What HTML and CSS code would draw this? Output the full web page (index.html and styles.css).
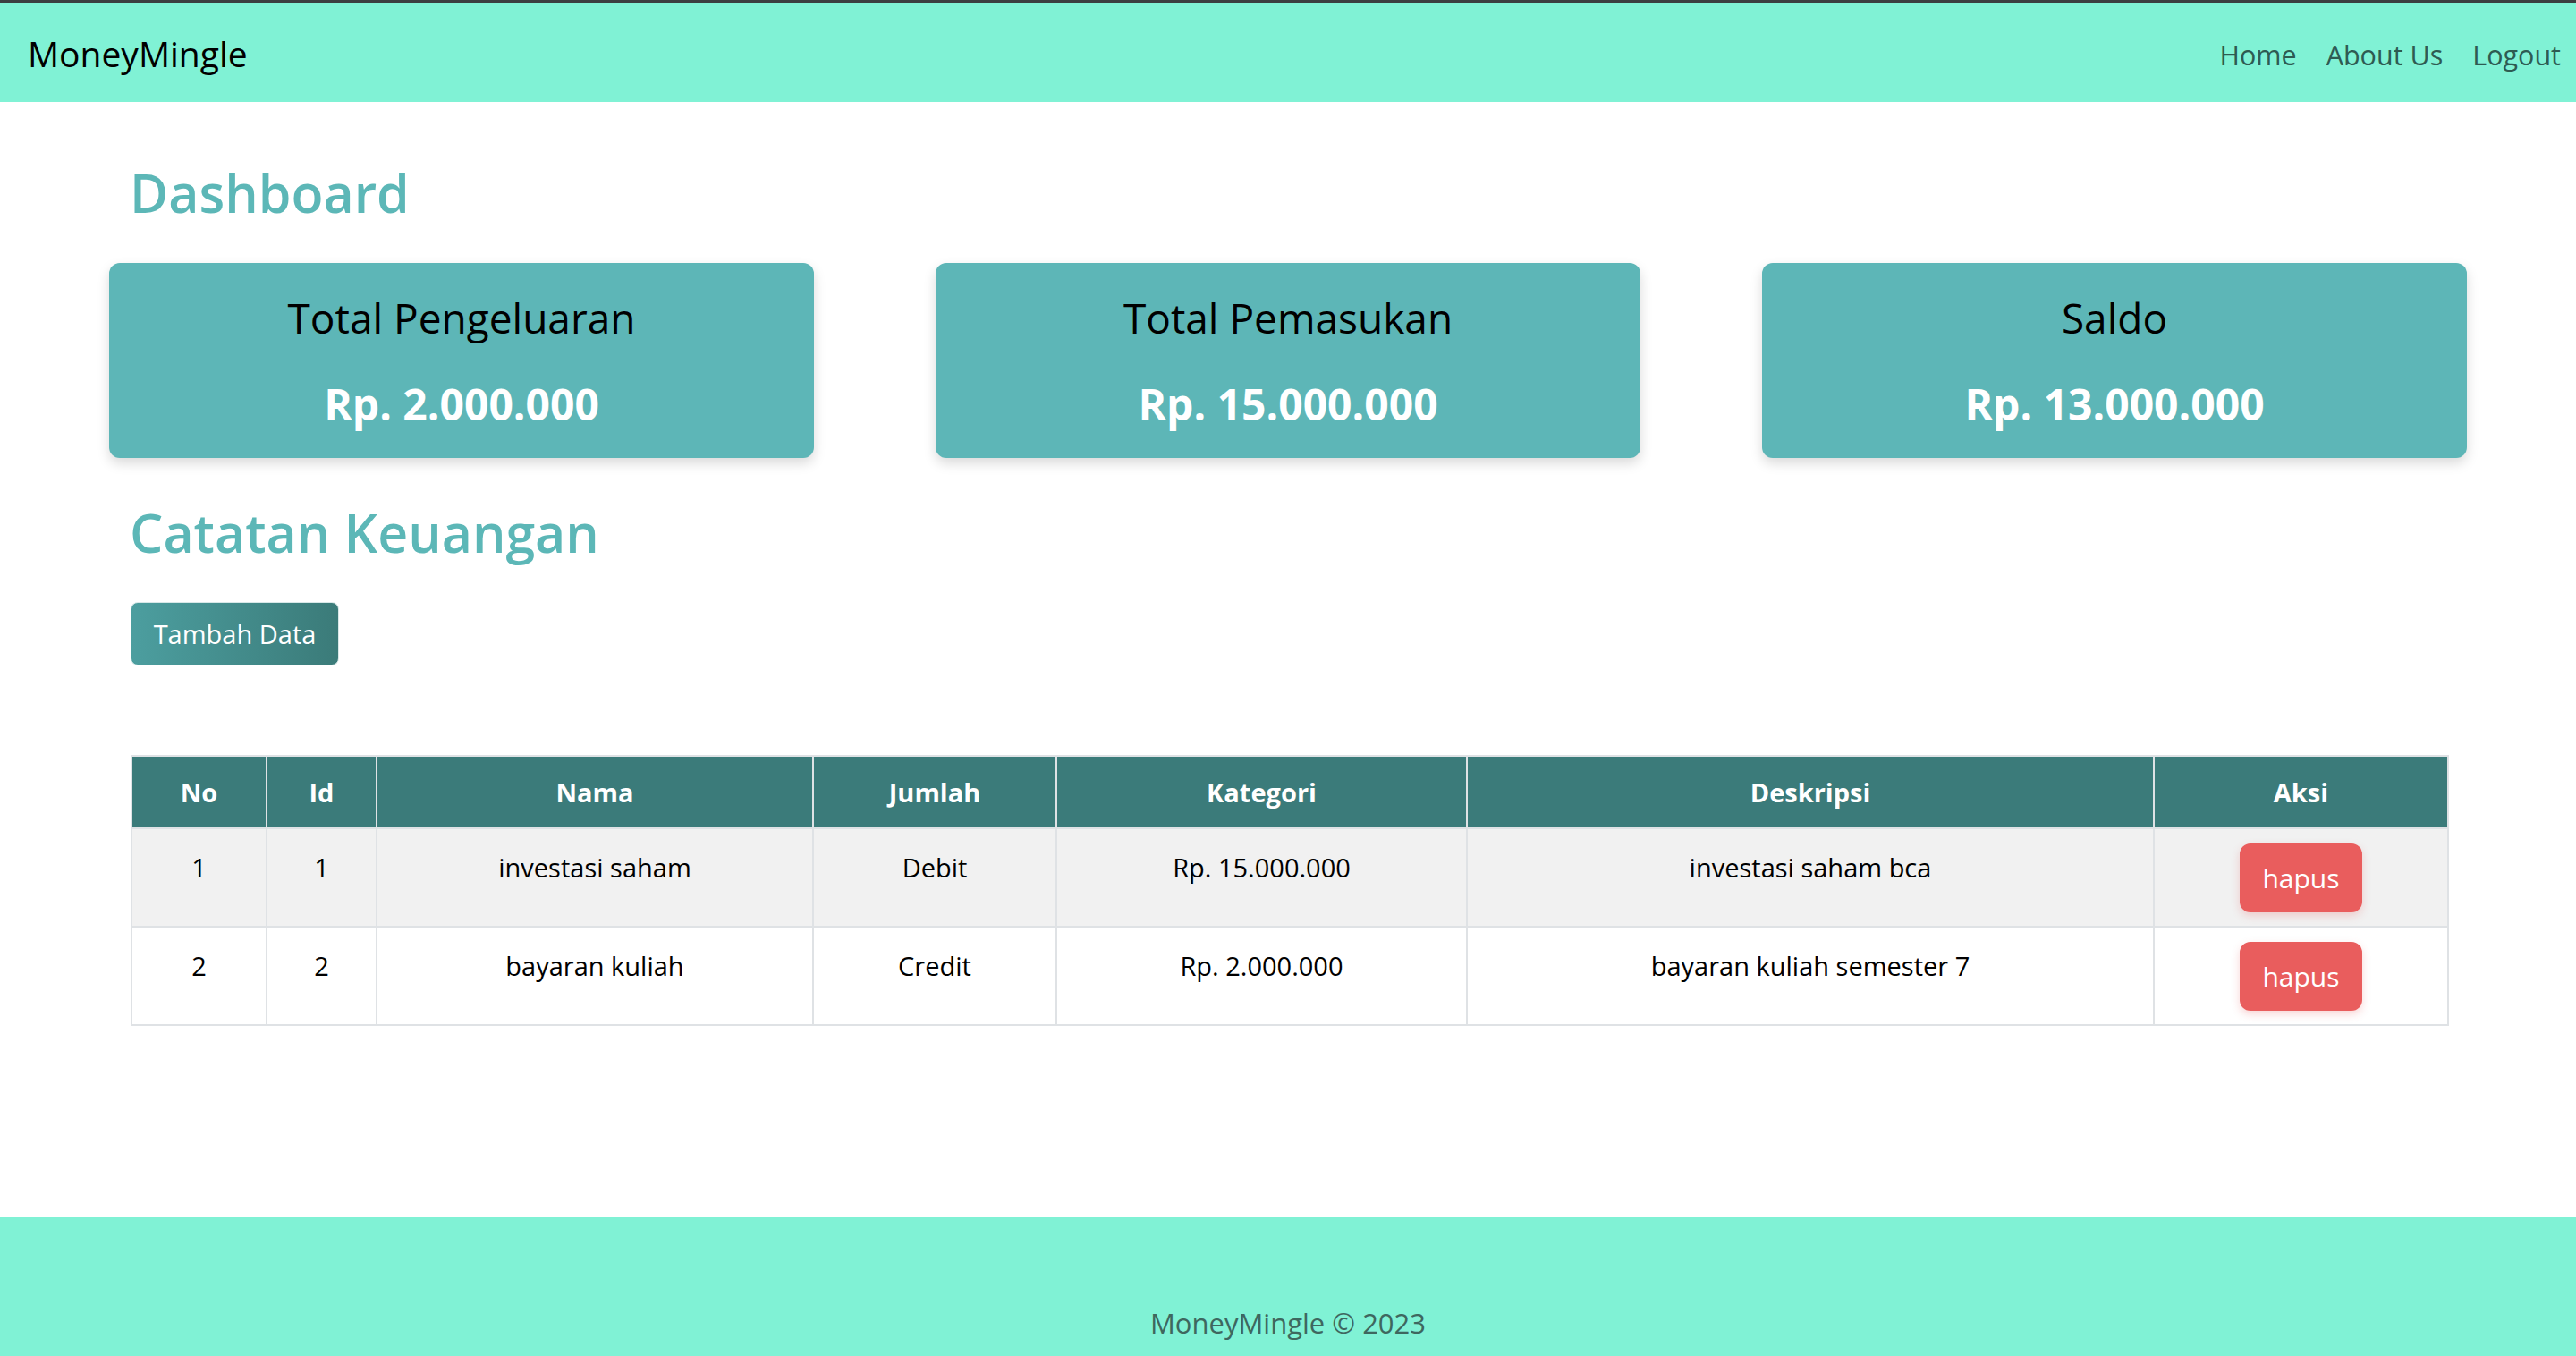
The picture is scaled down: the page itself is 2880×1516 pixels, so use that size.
FILE: index.html
```html
<!DOCTYPE html>
<html lang="id">
<head>
<meta charset="utf-8">
<title>MoneyMingle</title>
<link rel="stylesheet" href="styles.css">
</head>
<body>
<div class="topline"></div>
<nav class="navbar">
  <a class="brand" href="#">MoneyMingle</a>
  <ul class="nav-links">
    <li><a href="#">Home</a></li>
    <li><a href="#">About Us</a></li>
    <li><a href="#">Logout</a></li>
  </ul>
</nav>
<main class="container">
  <h1 class="section-title">Dashboard</h1>
  <div class="cards">
    <div class="card">
      <h3 class="card-title">Total Pengeluaran</h3>
      <p class="card-value">Rp. 2.000.000</p>
    </div>
    <div class="card">
      <h3 class="card-title">Total Pemasukan</h3>
      <p class="card-value">Rp. 15.000.000</p>
    </div>
    <div class="card">
      <h3 class="card-title">Saldo</h3>
      <p class="card-value">Rp. 13.000.000</p>
    </div>
  </div>
  <h1 class="section-title second">Catatan Keuangan</h1>
  <button class="btn-add">Tambah Data</button>
  <table class="records">
    <colgroup>
      <col class="c-no"><col class="c-id"><col class="c-nama"><col class="c-jumlah"><col class="c-kat"><col class="c-desk"><col class="c-aksi">
    </colgroup>
    <thead>
      <tr><th>No</th><th>Id</th><th>Nama</th><th>Jumlah</th><th>Kategori</th><th>Deskripsi</th><th>Aksi</th></tr>
    </thead>
    <tbody>
      <tr class="odd"><td>1</td><td>1</td><td>investasi saham</td><td>Debit</td><td>Rp. 15.000.000</td><td>investasi saham bca</td><td><button class="btn-del">hapus</button></td></tr>
      <tr><td>2</td><td>2</td><td>bayaran kuliah</td><td>Credit</td><td>Rp. 2.000.000</td><td>bayaran kuliah semester 7</td><td><button class="btn-del">hapus</button></td></tr>
    </tbody>
  </table>
</main>
<footer class="footer">
  <p>MoneyMingle © 2023</p>
</footer>
</body>
</html>
```
FILE: styles.css
```css
* { box-sizing: border-box; }
html, body { margin: 0; padding: 0; }
body {
  font-family: "Open Sans", "Noto Sans", sans-serif;
  background: #ffffff;
  color: #000;
  min-height: 1516px;
  display: flex;
  flex-direction: column;
}
.topline { height: 3px; background: #3c3f41; }
.navbar {
  height: 111px;
  background: #80f2d5;
  display: flex;
  align-items: center;
  justify-content: space-between;
  padding: 0 17px 0 31px;
}
.brand {
  font-size: 39px;
  color: #000;
  text-decoration: none;
  margin-top: 2px;
}
.nav-links {
  list-style: none;
  display: flex;
  gap: 33px;
  margin: 4px 0 0;
  padding: 0;
}
.nav-links a {
  font-size: 30.5px;
  color: #2e5b52;
  text-decoration: none;
}
.container {
  width: 2636px;
  margin: 0 auto;
  flex: 1;
}
.section-title {
  font-size: 59px;
  font-weight: 600;
  color: #5cb7b7;
  margin: 0;
  padding-left: 23px;
  line-height: 1.2;
}
.section-title:first-child { margin-top: 66px; }
.cards {
  display: grid;
  grid-template-columns: repeat(3, 788px);
  column-gap: 136px;
  margin-top: 43px;
}
.card {
  height: 218px;
  background: #5db6b7;
  border-radius: 12px;
  box-shadow: 0 6px 14px rgba(0,0,0,0.15);
  text-align: center;
  padding-top: 29px;
}
.card-title {
  margin: 0;
  font-size: 46px;
  font-weight: 500;
  color: #000;
  line-height: 1.4;
}
.card-value {
  margin: 31px 0 0;
  font-size: 48px;
  font-weight: 700;
  color: #ffffff;
  line-height: 1.4;
}
.second { margin-top: 48px; }
.btn-add {
  display: block;
  margin: 42px 0 0 24px;
  width: 233px;
  height: 71px;
  border: 1px solid #d8e8e8;
  border-radius: 8px;
  background: linear-gradient(90deg, #4c9e9f, #3b7b79);
  color: #ffffff;
  font-family: inherit;
  font-size: 29px;
  padding: 0;
}
.records {
  margin: 100px 0 0 24px;
  width: 2590px;
  border-collapse: collapse;
  table-layout: fixed;
  font-size: 29px;
}
.c-no { width: 151px; }
.c-id { width: 123px; }
.c-nama { width: 488px; }
.c-jumlah { width: 272px; }
.c-kat { width: 459px; }
.c-desk { width: 768px; }
.c-aksi { width: 329px; }
.records th, .records td {
  border: 2px solid #dfe2e5;
  text-align: center;
}
.records th {
  background: #3b7b7a;
  color: #ffffff;
  font-weight: 700;
  height: 81px;
  vertical-align: middle;
}
.records td {
  height: 110px;
  vertical-align: top;
  padding-top: 23px;
}
.records tr.odd td { background: #f1f1f1; }
.records td:last-child { padding-top: 16px; }
.btn-del {
  width: 137px;
  height: 77px;
  border: none;
  border-radius: 12px;
  background: #e95d5d;
  color: #ffffff;
  font-family: inherit;
  font-size: 30px;
  box-shadow: 0 4px 10px rgba(233,93,93,0.25);
  padding: 0;
}
.footer {
  height: 155px;
  background: #80f2d5;
  text-align: center;
  display: flex;
  align-items: flex-end;
  justify-content: center;
}
.footer p {
  margin: 0 0 16px;
  font-size: 31px;
  color: #3e675f;
}
```
